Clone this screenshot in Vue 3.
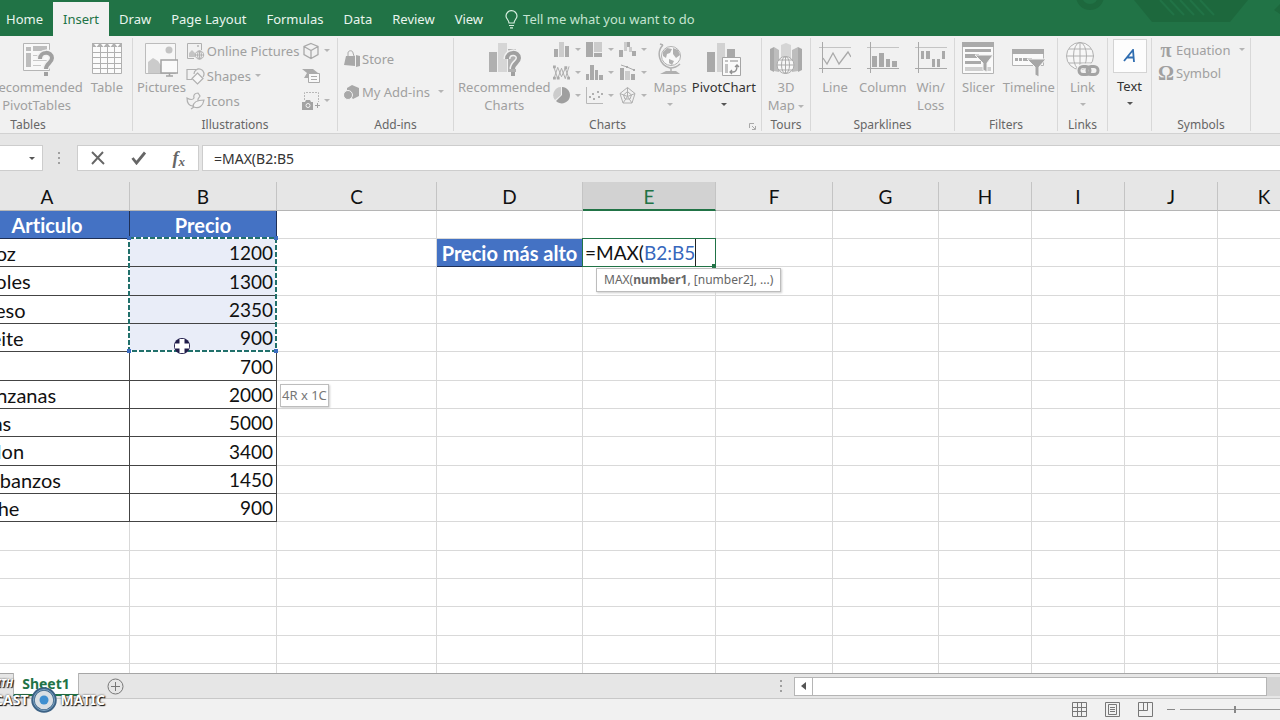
<template>
  <div class="excel">
    <nav class="tabs">
      <svg class="art" width="320" height="36" viewBox="0 0 320 36">
        <path fill="#1d683d" d="M174 0 L192 22 H270 L288 0z" />
        <g fill="none" stroke="#217346" stroke-width="2">
          <path d="M200 0 L214 15 M210 0 L224 15 M220 0 L234 15 M230 0 L244 15 M240 0 L254 15" />
        </g>
        <circle cx="130" cy="-4" r="11" fill="none" stroke="#1d683d" stroke-width="6" />
        <path fill="#1d683d" d="M-17 0 h13 v5 h-13z M314 10 l6 -6 v10z" />
      </svg>
      <button
        v-for="tab in tabs"
        :key="tab"
        class="tab"
        :class="{ active: tab === activeTab }"
        @click="activeTab = tab"
      >{{ tab }}</button>
      <button class="tell-me">
        <svg width="13" height="19" viewBox="0 0 13 19" fill="none" stroke="#d7efe0" stroke-width="1.2">
          <path d="M4 13 C4 10 1 9 1 6 A5.5 5.3 0 0 1 12 6 C12 9 9 10 9 13 Z M4 15.5 H9 M5 17.8 H8" />
        </svg>
        Tell me what you want to do
      </button>
    </nav>

    <section class="ribbon">
      <div class="group g-tables">
        <div class="body">
          <button class="big" disabled>
            <svg width="36" height="36" viewBox="0 0 36 36">
              <path fill="#f8f8f8" stroke="#b5b5b5" d="M4.500 1.500 h26 v27 h-26z" />
              <path fill="#bdbdbd" d="M7 5h5v4H7z M14 4h14v5H14z M7 11h5v14H7z" />
              <path stroke="#c8c8c8" d="M14 13.500h14 M14 18.500h14 M14 23.500h8" />
              <path fill="none" stroke="#f1f1f1" stroke-width="7" d="M21 17 C21 9 33 9 33 16 C33 21 27 21 27 27" />
              <path fill="none" stroke="#a0a0a0" stroke-width="4" d="M21 17 C21 9 33 9 33 16 C33 21 27 21 27 27" />
              <path fill="#a0a0a0" d="M25 30h4v4h-4z" />
            </svg>
            <span>Recommended<br>PivotTables</span>
          </button>
          <button class="big" disabled>
            <svg width="30" height="36" viewBox="0 0 30 36">
              <path fill="#fbfbfb" stroke="#b0b0b0" d="M.5 1.500h29v30H.5z" />
              <path fill="#b0b0b0" d="M0 1h30v4H0z" />
              <path fill="#fff" d="M2 2h5l-2.500 3z M9 2h5l-2.500 3z M16 2h5l-2.500 3z M23 2h5l-2.500 3z" />
              <path stroke="#b0b0b0" d="M0 10.500h30 M0 15.500h30 M0 21.500h30 M0 26.500h30 M8.500 5v26 M15.500 5v26 M22.500 5v26" />
            </svg>
            <span>Table</span>
          </button>
        </div>
        <div class="caption">Tables</div>
      </div>

      <div class="group g-illus">
        <div class="body">
          <button class="big" disabled>
            <svg width="34" height="36" viewBox="0 0 34 36">
              <path fill="#f7f7f7" stroke="#bcbcbc" d="M1.500 1.500h30v30h-30z" />
              <circle cx="25" cy="8" r="3.500" fill="#c4c4c4" />
              <path fill="#cbcbcb" d="M4 31 V20 L9 16 L14 19 L18 25 V31z" />
              <path fill="#fafafa" stroke="#a3a3a3" stroke-width="1.500" d="M17 18h17v13H17z" />
              <path stroke="#a3a3a3" stroke-width="1.500" d="M25.500 31v3 M22 34h7" />
            </svg>
            <span>Pictures</span>
          </button>
          <div class="rows r24">
            <button class="small" disabled>
              <svg width="19" height="18" viewBox="0 0 19 18" fill="none" stroke="#b0b0b0">
                <path d="M8 16.500H1.500v-15h14V8" />
                <path fill="#c4c4c4" stroke="none" d="M3 15v-4l3-3 3 3v4z M11 3h2v2h-2z" />
                <circle cx="13.500" cy="13" r="4.200" fill="#f1f1f1" />
                <path d="M9.500 13h8 M13.500 9v8" />
                <ellipse cx="13.500" cy="13" rx="2" ry="4" />
              </svg>
              Online Pictures
            </button>
            <button class="small" disabled>
              <svg width="19" height="18" viewBox="0 0 19 18" fill="none" stroke="#b0b0b0" stroke-width="1.200">
                <path d="M6 12.500H1v-10h9 M8 7a5 5 0 1 1 9 3" />
                <path fill="#f7f7f7" d="M11.500 6l5.500 5.500-5.500 5.500L6 11.500z" />
              </svg>
              Shapes<i class="caret side" />
            </button>
            <button class="small" disabled>
              <svg width="19" height="18" viewBox="0 0 19 18" fill="none" stroke="#b0b0b0" stroke-width="1.200">
                <path d="M1 6c3 2 6 2 7 0C7 3 9 1 12 1l2 3-2 3c1 4-2 7-5 7-4 0-6-3-6-8z" />
                <path fill="#f4f4f4" d="M7 15c0-5 4-7 11-7-1 6-5 9-10 7l-3 2" />
              </svg>
              Icons
            </button>
          </div>
          <div class="rows r24 extra">
            <button class="small" disabled aria-label="3D Models">
              <svg width="18" height="18" viewBox="0 0 18 18" fill="none" stroke="#a9a9a9" stroke-width="1.300">
                <path d="M9 1.500l7 3v8l-7 4-7-4v-8z M2 4.500l7 4 7-4 M9 8.500v8" />
              </svg>
              <i class="caret" />
            </button>
            <button class="small" disabled aria-label="SmartArt">
              <svg width="18" height="18" viewBox="0 0 18 18">
                <path fill="#aaa" d="M0 2h11l5 4-3 5H2l3-5z" />
                <path fill="#f8f8f8" stroke="#aaa" d="M6.500 6.500h11v9h-11z M9 9.500h6 M9 12.500h6" />
              </svg>
            </button>
            <button class="small" disabled aria-label="Screenshot">
              <svg width="18" height="18" viewBox="0 0 18 18">
                <path fill="none" stroke="#b8b8b8" stroke-dasharray="2 1" d="M2.500 8V.5h14V10" />
                <path fill="#a3a3a3" d="M0 10h3l1-2h4l1 2h2v8H0z M13 13h2v-2h1v2h2v1h-2v2h-1v-2h-2z" />
                <circle cx="6" cy="13.500" r="2" fill="none" stroke="#f1f1f1" />
              </svg>
              <i class="caret" />
            </button>
          </div>
        </div>
        <div class="caption">Illustrations</div>
      </div>

      <div class="group g-addins">
        <div class="body">
          <div class="rows r33">
            <button class="small" disabled>
              <svg width="16" height="18" viewBox="0 0 16 18">
                <path fill="none" stroke="#a8a8a8" d="M4 6V3c0-3 5-3 5 0l1 3" />
                <path fill="#a8a8a8" d="M2 6h9v10L0 15z M12 5l4 1v10l-4 1z" />
              </svg>
              Store
            </button>
            <button class="small" disabled>
              <svg width="16" height="18" viewBox="0 0 16 18">
                <path fill="#a8a8a8" d="M8 2l7 3v8l-6 3-6-6V5z" />
                <circle cx="4" cy="12" r="4.500" fill="#a8a8a8" stroke="#f1f1f1" />
              </svg>
              My Add-ins<i class="caret far" />
            </button>
          </div>
        </div>
        <div class="caption">Add-ins</div>
      </div>

      <div class="group g-charts">
        <div class="body">
          <button class="big" disabled>
            <svg width="34" height="36" viewBox="0 0 34 36">
              <path fill="#b0b0b0" d="M2 10h8v20H2z" />
              <path fill="#d6d6d6" d="M11 1h9v29h-9z" />
              <path fill="#b0b0b0" d="M21 7h8v23h-8z" />
              <path fill="none" stroke="#f1f1f1" stroke-width="7" d="M20 17c0-8 12-8 12-1 0 5-6 5-6 11" />
              <path fill="none" stroke="#a0a0a0" stroke-width="4" d="M20 17c0-8 12-8 12-1 0 5-6 5-6 11" />
              <path fill="#a0a0a0" d="M24 30h4v4h-4z" />
            </svg>
            <span>Recommended<br>Charts</span>
          </button>
          <div class="chart-grid">
            <button class="small" disabled aria-label="Column chart">
              <svg width="17" height="17" viewBox="0 0 17 17"><path fill="#aaa" d="M1 8h4v8H1z M12 5h4v11h-4z" /><path fill="#ccc" d="M6 1h5v15H6z" /></svg>
              <i class="caret" />
            </button>
            <button class="small" disabled aria-label="Hierarchy chart">
              <svg width="17" height="17" viewBox="0 0 17 17"><path fill="#aaa" d="M0 1h7v15H0z M8 12h8v4H8z" /><path fill="#ccc" d="M8 1h8v10H8z" /></svg>
              <i class="caret" />
            </button>
            <button class="small" disabled aria-label="Waterfall chart">
              <svg width="17" height="17" viewBox="0 0 17 17"><path fill="#aaa" d="M0 9h4v7H0z M8 1h3v5H8z M13 10h4v5h-4z" /><path fill="#ccc" d="M5 1h3v9H5z M10 6h3v5h-3z" /></svg>
              <i class="caret" />
            </button>
            <button class="small" disabled aria-label="Line chart">
              <svg width="17" height="17" viewBox="0 0 18 17" fill="none" stroke="#aaa"><path d="M1 3l4 12 4-11 4 11 4-13 M1 15L5 3l4 10 4-9 4 11" /><path fill="#aaa" stroke="none" d="M0 1h3v3H0z M4 13h3v3H4z M12 2h3v3h-3z M15 13h3v3h-3z M0 13h3v3H0z" /></svg>
              <i class="caret" />
            </button>
            <button class="small" disabled aria-label="Statistic chart">
              <svg width="17" height="17" viewBox="0 0 17 17"><path fill="#aaa" d="M0 10h3v6H0z M4 1h4v15H4z M9 6h3v10H9z M13 11h4v5h-4z" /></svg>
              <i class="caret" />
            </button>
            <button class="small" disabled aria-label="Combo chart">
              <svg width="17" height="17" viewBox="0 0 17 17"><path fill="#aaa" d="M1 4h4v12H1z M12 10h4v6h-4z" /><path fill="#ccc" d="M6 7h5v9H6z" /><path fill="none" stroke="#aaa" d="M2 1l6 2 7 3" /><path fill="#aaa" d="M7 2h2v2H7z M14 5h2v2h-2z" /></svg>
              <i class="caret" />
            </button>
            <button class="small" disabled aria-label="Pie chart">
              <svg width="17" height="17" viewBox="0 0 17 17"><path fill="#9f9f9f" d="M9 0a8.200 8.200 0 1 1-6 14l6-6z" /><path fill="#ccc" d="M8 0v8l-6 5A8 8 0 0 1 8 0z" /></svg>
              <i class="caret" />
            </button>
            <button class="small" disabled aria-label="Scatter chart">
              <svg width="17" height="17" viewBox="0 0 17 17"><path fill="none" stroke="#b8b8b8" d="M.5 0v16.500H17" /><path fill="#b0b0b0" d="M3 9h2v2H3z M6 6h2v2H6z M7 11h2v2H7z M11 4h2v2h-2z M12 9h2v2h-2z M15 6h2v2h-2z" /></svg>
              <i class="caret" />
            </button>
            <button class="small" disabled aria-label="Radar chart">
              <svg width="17" height="17" viewBox="0 0 17 17" fill="none" stroke="#b0b0b0"><path d="M8.500.500l7.500 6-3 9.500H4L1 6.500z M8.500 4.500l4 3.500-1.500 4H6L4.500 8z M8.500.500v9 M16 6.500l-7.500 3L13 16 M1 6.500l7.500 3L4 16" /></svg>
              <i class="caret" />
            </button>
          </div>
          <button class="big" disabled>
            <svg width="26" height="36" viewBox="0 0 26 36">
              <circle cx="14" cy="14" r="9.500" fill="#f8f8f8" stroke="#b0b0b0" />
              <path fill="#b0b0b0" d="M6 10l4-4 5 1-2 4-3 1-1 4-3-2z M16 6l5 2 2 5-4 3-3-4z M12 17l5 2-2 4-3-2z" />
              <path fill="none" stroke="#b0b0b0" stroke-width="1.500" d="M6 3C-1 10 2 23 13 26c4 0 7-1 10-4 M14 26v4 M6 3l-3-1" />
              <path fill="#b0b0b0" d="M9 29h10l4 3H3z" />
            </svg>
            <span>Maps</span><i class="caret" />
          </button>
          <button class="big live">
            <svg width="34" height="36" viewBox="0 0 34 36">
              <path fill="#a9a9a9" d="M0 10h8v20H0z M20 7h8v8h-8z" />
              <path fill="#d2d2d2" d="M10 1h8v29h-8z" />
              <path fill="#fafafa" stroke="#a5a5a5" d="M15.500 15.500h18v18h-18z" />
              <path fill="#c2c2c2" d="M18 18h3v2h-3z M23 18h8v2h-8z M18 22h3v9h-3z" />
              <path fill="none" stroke="#909090" stroke-width="1.300" d="M23 30h3c3 0 4-3 4-6 M25 28l-2 2 2 2 M28 25l2-2 2 2" />
            </svg>
            <span>PivotChart</span><i class="caret" />
          </button>
        </div>
        <div class="caption">Charts</div>
        <button class="launcher" aria-label="Charts options">
          <svg width="7" height="7" viewBox="0 0 7 7" fill="none" stroke="#a9a9a9"><path d="M.5 5V.5H5 M3 3l3 3 M6.500 3v3.500H3" /></svg>
        </button>
      </div>

      <div class="group g-tours">
        <div class="body">
          <button class="big" disabled>
            <svg width="32" height="36" viewBox="0 0 32 36">
              <path fill="#aaa" d="M0 7l4-2v25l-4-2z M28 5l4 2v21l-4 2z" />
              <path fill="#bdbdbd" d="M4 5l5 3v22l-5-1z M22 8l6-3v24l-6 1z" />
              <path fill="#d5d5d5" d="M11 3l5-2 5 2v14H11z" />
              <circle cx="15.500" cy="23" r="8.500" fill="#f8f8f8" stroke="#ababab" />
              <path fill="none" stroke="#ababab" d="M7 23h17 M9 18h13 M9 28h13 M15.500 15v16" />
              <ellipse cx="15.500" cy="23" rx="4" ry="8.500" fill="none" stroke="#ababab" />
            </svg>
            <span>3D<br>Map <i class="caret inline" /></span>
          </button>
        </div>
        <div class="caption">Tours</div>
      </div>

      <div class="group g-spark">
        <div class="body">
          <button class="big" disabled>
            <svg width="32" height="36" viewBox="0 0 32 36" fill="none" stroke="#a9a9a9">
              <path stroke="#c4c4c4" d="M0 5.500h32" /><path d="M3.500 0v31 M0 26.500h32" />
              <path stroke-width="1.300" d="M4 16l4 6 6-11 6 11 9-12 3 5" />
            </svg>
            <span>Line</span>
          </button>
          <button class="big" disabled>
            <svg width="32" height="36" viewBox="0 0 32 36">
              <path stroke="#c4c4c4" d="M0 5.500h32" /><path stroke="#a9a9a9" d="M3.500 0v31 M0 26.500h32" />
              <path fill="#a9a9a9" d="M5 14h5v11H5z M12 11h5v14h-5z M19 17h4v8h-4z M25 19h5v6h-5z" />
            </svg>
            <span>Column</span>
          </button>
          <button class="big" disabled>
            <svg width="32" height="36" viewBox="0 0 32 36">
              <path stroke="#c4c4c4" d="M0 5.500h32" /><path stroke="#a9a9a9" d="M3.500 0v31 M0 26.500h32" />
              <path fill="#a9a9a9" d="M6 9h3v8H6z M11 9h4v8h-4z M17 17h3v8h-3z M22 17h3v8h-3z M27 9h3v8h-3z" />
            </svg>
            <span>Win/<br>Loss</span>
          </button>
        </div>
        <div class="caption">Sparklines</div>
      </div>

      <div class="group g-filters">
        <div class="body">
          <button class="big" disabled>
            <svg width="32" height="36" viewBox="0 0 32 36">
              <path fill="#fafafa" stroke="#b4b4b4" d="M.5.5h31v31H.5z" />
              <path fill="#aaa" d="M0 0h32v5H0z M3 7h26v3H3z M3 12h14v4H3z M3 19h16v3H3z" />
              <path fill="#cfcfcf" d="M3 25h26v4H3z" />
              <path fill="#a6a6a6" stroke="#f4f4f4" d="M13 13h18l-6 8v9l-4-2v-7z" />
            </svg>
            <span>Slicer</span>
          </button>
          <button class="big" disabled>
            <svg width="34" height="36" viewBox="0 0 34 36">
              <path fill="#fafafa" stroke="#b4b4b4" d="M.5 7.500h31v16H.5z" />
              <path fill="#aaa" d="M0 7h32v5H0z M3 16h3v3H3z M7 16h3v3H7z M11 16h9v3h-9z" />
              <path fill="#a6a6a6" stroke="#f4f4f4" d="M15 17h19l-7 8v10l-4-2v-8z" />
            </svg>
            <span>Timeline</span>
          </button>
        </div>
        <div class="caption">Filters</div>
      </div>

      <div class="group g-links">
        <div class="body">
          <button class="big" disabled>
            <svg width="34" height="36" viewBox="0 0 34 36" fill="none" stroke="#b0b0b0">
              <circle cx="14" cy="14" r="13.500" fill="#f7f7f7" />
              <ellipse cx="14" cy="14" rx="6.500" ry="13.500" />
              <path d="M14 0v28 M1 14h27 M3 7h22 M3 21h22" />
              <rect x="13" y="24" width="20" height="9" rx="4.500" stroke="#f1f1f1" stroke-width="5" />
              <g stroke="#a3a3a3" stroke-width="3"><rect x="13" y="24.500" width="11" height="8" rx="4" /><rect x="21" y="24.500" width="11" height="8" rx="4" /></g>
            </svg>
            <span>Link</span><i class="caret" />
          </button>
        </div>
        <div class="caption">Links</div>
      </div>

      <div class="group g-text">
        <div class="body">
          <button class="big live text-btn">
            <span class="tile">
              <svg width="14" height="14" viewBox="0 0 14 14" fill="none" stroke="#2f6db0" stroke-width="1.800"><path d="M1 12L10 1l1 12 M4 8.500h7" /></svg>
            </span>
            <span>Text</span><i class="caret" />
          </button>
        </div>
      </div>

      <div class="group g-symbols">
        <div class="body">
          <div class="rows r23">
            <button class="small" disabled><span class="glyph">π</span>Equation<i class="caret far" /></button>
            <button class="small" disabled><span class="glyph">Ω</span>Symbol</button>
          </div>
        </div>
        <div class="caption">Symbols</div>
      </div>
    </section>

    <section class="formula-bar">
      <button class="name-box" aria-label="Name box"><i class="caret" /></button>
      <span class="dots"><b /><b /><b /></span>
      <div class="entry-buttons">
        <button aria-label="Cancel">
          <svg width="14" height="14" viewBox="0 0 14 14" fill="none" stroke="#666" stroke-width="1.900"><path d="M1 1l12 12 M12 1L1 13" /></svg>
        </button>
        <button aria-label="Enter">
          <svg width="16" height="14" viewBox="0 0 16 14" fill="none" stroke="#666" stroke-width="2.800"><path d="M1.500 7l4 5L14 1.500" /></svg>
        </button>
        <button aria-label="Insert function" class="fx">f<sub>x</sub></button>
      </div>
      <input v-model="formula" class="formula" aria-label="Formula bar">
    </section>

    <main class="sheet">
      <table>
        <colgroup>
          <col v-for="col in columns" :key="col.name" :style="{ width: col.width + 'px' }">
        </colgroup>
        <thead>
          <tr>
            <th v-for="col in columns" :key="col.name" :class="{ current: col.name === 'E' }">{{ col.name }}</th>
          </tr>
        </thead>
        <tbody>
          <tr v-for="row in 30" :key="row">
            <td v-for="col in columns" :key="col.name" :class="cellClass(col.name, row)">
              <template v-if="col.name === 'E' && row === 2">
                <div class="editor">=MAX(<span>B2:B5</span></div>
                <div class="tip">MAX(<b>number1</b>, [number2], ...)</div>
              </template>
              <template v-else>{{ cellText(col.name, row) }}</template>
              <div v-if="col.name === 'B' && row === 2" class="range">
                <svg class="ants" width="100%" height="100%">
                  <rect x="1" y="1" width="147" height="113" fill="none" stroke="#fff" stroke-width="2" />
                  <rect x="1" y="1" width="147" height="113" fill="none" stroke="#21706b" stroke-width="2" stroke-dasharray="5 2" />
                </svg>
                <i class="handle tl" /><i class="handle tr" /><i class="handle bl" /><i class="handle br" />
                <svg class="pointer" width="18" height="18" viewBox="0 0 18 18">
                  <circle cx="9" cy="9" r="8" fill="#201c4a" />
                  <path fill="#fff" d="M6.500 2h5v4.500H16v5h-4.500V16h-5v-4.500H2v-5h4.500z" />
                </svg>
                <div class="size-tip">4R x 1C</div>
              </div>
            </td>
          </tr>
        </tbody>
      </table>
    </main>

    <footer>
      <div class="sheet-tabs">
        <button class="sheet-tab">Sheet1</button>
        <button class="add" aria-label="New sheet">
          <svg width="17" height="17" viewBox="0 0 17 17" fill="none" stroke="#777"><circle cx="8.500" cy="8.500" r="7.500" /><path d="M4 8.500h9 M8.500 4v9" /></svg>
        </button>
        <span class="dots"><b /><b /><b /></span>
        <div class="scroll">
          <button class="arrow" aria-label="Scroll left"><i /></button>
          <div class="thumb" />
        </div>
      </div>
      <div class="status">
        <button aria-label="Normal view">
          <svg width="15" height="15" viewBox="0 0 15 15" fill="none" stroke="#777"><path d="M.5.5h14v14H.5z M.5 5.500h14 M.5 9.500h14 M5.500.5v14 M9.500.5v14" /></svg>
        </button>
        <button aria-label="Page layout view">
          <svg width="15" height="15" viewBox="0 0 15 15" fill="none" stroke="#777"><path d="M.5.5h14v14H.5z M3.500 2.500h8v10h-8z M5 5.500h5 M5 7.500h5 M5 9.500h5" /></svg>
        </button>
        <button aria-label="Page break view">
          <svg width="15" height="15" viewBox="0 0 15 15" fill="none" stroke="#777"><path d="M.5.5h14v14H.5z M.5 8.500h9V.5 M5.500.5v8" /></svg>
        </button>
        <button class="minus" aria-label="Zoom out"><i /></button>
        <input type="range" class="zoom" min="0" max="100" value="50" aria-label="Zoom">
      </div>
      <div class="watermark">
        <span class="with">WITH</span>
        <span class="cast">CAST</span>
        <svg width="28" height="28" viewBox="0 0 28 28">
          <circle cx="14" cy="14" r="11" fill="#d9dfe4" stroke="#3c6285" stroke-width="3.500" />
          <circle cx="14" cy="14" r="10.500" fill="none" stroke="#7fa6c6" />
          <circle cx="14" cy="14" r="4.500" fill="#3f8fd0" />
        </svg>
        <span class="matic">MATIC</span>
      </div>
    </footer>
  </div>
</template>

<script setup>
import { ref } from 'vue';

const tabs = ['Home', 'Insert', 'Draw', 'Page Layout', 'Formulas', 'Data', 'Review', 'View'];
const activeTab = ref('Insert');
const formula = ref('=MAX(B2:B5');

const widths = [165, 147, 160, 146, 133, 117, 106];
const columns = 'ABCDEFGHIJK'.split('').map((name, i) => ({ name, width: widths[i] || 93 }));

const items = [
  ['Articulo', 'Precio'],
  ['Arroz', 1200],
  ['Frijoles', 1300],
  ['Queso', 2350],
  ['Aceite', 900],
  ['', 700],
  ['Manzanas', 2000],
  ['Uvas', 5000],
  ['Melon', 3400],
  ['Garbanzos', 1450],
  ['Leche', 900],
];

const cellText = (col, row) => {
  if (col === 'D' && row === 2) return 'Precio más alto';
  const item = items[row - 1];
  if (!item) return '';
  if (col === 'A') return item[0];
  if (col === 'B') return item[1];
  return '';
};

const cellClass = (col, row) => ({
  filled: (col === 'A' || col === 'B') && row <= items.length,
  title: ((col === 'A' || col === 'B') && row === 1) || (col === 'D' && row === 2),
  name: col === 'A' && row > 1,
  number: col === 'B' && row > 1,
  picked: col === 'B' && row >= 2 && row <= 5,
  anchor: col === 'B' && row === 2,
  editing: col === 'E' && row === 2,
});
</script>

<style>
body {
  margin: 0;
  overflow: hidden;
}
</style>

<style scoped>
.excel {
  height: 100vh;
  display: flex;
  flex-direction: column;
  overflow: hidden;
  font-family: "Noto Sans", "Open Sans", sans-serif;
  font-size: 13px;
  color: #333;
  background: #e6e6e6;
}

button {
  font: inherit;
  color: inherit;
  background: none;
  border: none;
  padding: 0;
  margin: 0;
  white-space: nowrap;
}

svg {
  display: block;
  flex: none;
}

/* tabs */
.tabs {
  position: relative;
  flex: none;
  display: flex;
  height: 36px;
  box-sizing: border-box;
  padding-top: 2px;
  background: #217346;
  color: #e9f5ee;
}

.art {
  position: absolute;
  top: 0;
  right: 0;
}

.tab {
  padding: 0 10px;
}

.tab:first-of-type {
  padding-left: 6px;
}

.tab.active {
  background: #f1f1f1;
  color: #217346;
}

.tell-me {
  display: flex;
  align-items: center;
  gap: 5px;
  padding-left: 12px;
  color: #c5e3d1;
}

/* ribbon */
.ribbon {
  flex: none;
  display: flex;
  height: 98px;
  box-sizing: border-box;
  padding: 2px 0;
  margin-left: -76px;
  background: #f1f1f1;
  border-bottom: 1px solid #d2d2d2;
}

.group {
  position: relative;
  flex: none;
  box-sizing: border-box;
  display: flex;
  flex-direction: column;
  border-right: 1px solid #d8d8d8;
}

.body {
  flex: 1;
  display: flex;
}

.caption {
  font-size: 12px;
  line-height: 12px;
  text-align: center;
  color: #666;
}

.g-tables { width: 209px; }
.g-tables .body { justify-content: flex-end; gap: 8px; padding-right: 9px; }
.g-illus { width: 205px; }
.g-illus .body { padding-left: 4px; }
.g-addins { width: 116px; }
.g-addins .body { padding: 4px 0 0 6px; }
.g-charts { width: 308px; }
.g-charts .body { padding-left: 4px; gap: 2px; }
.g-tours { width: 49px; }
.g-tours .body, .g-links .body, .g-text .body { justify-content: center; }
.g-spark { width: 144px; }
.g-spark .body { padding-left: 8px; gap: 8px; }
.g-filters { width: 103px; }
.g-filters .body { padding-left: 7px; gap: 8px; }
.g-links { width: 50px; }
.g-text { width: 44px; }
.g-symbols { width: 99px; }
.g-symbols .body { padding-left: 6px; }

.big {
  display: flex;
  flex-direction: column;
  align-items: center;
  height: 76px;
  padding-top: 4px;
  line-height: 18px;
  color: #a0a0a0;
}

.big > .caret {
  margin-top: 7px;
}

.small {
  display: flex;
  align-items: center;
  gap: 2px;
  color: #a0a0a0;
}

.big.live {
  color: #333;
}

.caret {
  display: inline-block;
  flex: none;
  border: 3px solid transparent;
  border-top-color: #b5b5b5;
  border-bottom: none;
}

.live .caret,
.name-box .caret {
  border-top-color: #555;
}

.inline {
  vertical-align: middle;
}

.side {
  margin-left: 2px;
}

.far {
  margin-left: 6px;
}

.r23 .small { height: 23px; }
.r24 .small { height: 25px; }
.r33 .small { height: 33px; }

.extra {
  margin-left: 3px;
}

.extra .small {
  gap: 4px;
}

.chart-grid {
  display: grid;
  grid-template-columns: repeat(3, 33px);
  grid-auto-rows: 23px;
}

.chart-grid .small {
  gap: 5px;
}

.g-charts .live {
  margin-left: 3px;
}

.text-btn {
  padding-top: 1px;
}

.tile {
  display: grid;
  place-items: center;
  width: 32px;
  height: 32px;
  margin-bottom: 4px;
  background: #fdfdfd;
  border: 1px solid #d4d4d4;
}

.glyph {
  width: 16px;
  font: bold 20px/20px "Liberation Serif", serif;
  text-align: center;
}

.launcher {
  position: absolute;
  right: 5px;
  bottom: 1px;
}

/* formula bar */
.formula-bar {
  flex: none;
  display: flex;
  align-items: center;
  height: 48px;
}

.name-box {
  display: flex;
  align-items: center;
  justify-content: flex-end;
  width: 43px;
  height: 26px;
  box-sizing: border-box;
  padding-right: 7px;
  background: #fff;
  border: 1px solid #cdcdcd;
  border-left: none;
}

.dots {
  display: flex;
  flex-direction: column;
  gap: 3px;
}

.dots b {
  width: 2px;
  height: 2px;
  background: #a0a0a0;
}

.formula-bar .dots {
  margin: 0 17px 0 15px;
}

.entry-buttons {
  display: flex;
  align-items: center;
  justify-content: space-around;
  width: 122px;
  height: 26px;
  box-sizing: border-box;
  background: #fff;
  border: 1px solid #cdcdcd;
}

.fx {
  font: italic bold 18px/18px "Liberation Serif", serif;
  color: #666;
}

.fx sub {
  font-size: 13px;
  line-height: 1px;
  vertical-align: -2px;
}

.formula {
  flex: 1;
  height: 26px;
  box-sizing: border-box;
  margin-left: 3px;
  padding: 0 11px;
  font: inherit;
  font-size: 14px;
  color: #333;
  background: #fff;
  border: 1px solid #cdcdcd;
  border-right: none;
  border-radius: 0;
  outline: none;
}

/* grid */
.sheet {
  flex: 1;
  min-height: 0;
  overflow: hidden;
  background: #fff;
}

table {
  width: max-content;
  margin-left: -35px;
  table-layout: fixed;
  border-collapse: separate;
  border-spacing: 0;
  font-family: Lato, "Open Sans", sans-serif;
  font-size: 19px;
  font-variant-ligatures: none;
  line-height: 24px;
  color: #111;
}

th {
  height: 29px;
  box-sizing: border-box;
  padding: 2px 0 0;
  font-weight: normal;
  background: #e6e6e6;
  border-right: 1px solid #c4c4c4;
  border-bottom: 1px solid #b5b5b5;
}

th.current {
  color: #217346;
  background: #d2d2d2;
  border-bottom: 2px solid #217346;
}

td {
  height: 28px;
  box-sizing: border-box;
  padding: 1px 3px 0;
  white-space: nowrap;
  border-right: 1px solid #d9d9d9;
  border-bottom: 1px solid #d9d9d9;
}

tr:nth-child(3n) td {
  height: 29px;
}

td.filled {
  border-color: #444;
}

td.title {
  padding-top: 0;
  font-size: 20px;
  font-weight: bold;
  text-align: center;
  color: #fff;
  background: #4472c4;
  border-color: #1e2f55;
}

td.name {
  padding-top: 0;
  font-size: 20px;
}

td.number {
  text-align: right;
}

td.picked {
  background: #e9edf8;
}

td.anchor,
td.editing {
  position: relative;
}

.range {
  position: absolute;
  z-index: 1;
  top: -2px;
  left: -2px;
  width: 149px;
  height: 115px;
}

.handle {
  position: absolute;
  width: 4px;
  height: 4px;
  background: #3b6cc0;
}

.tl, .tr { top: -1px; }
.bl, .br { bottom: -1px; }
.tl, .bl { left: -1px; }
.tr, .br { right: -1px; }

.pointer {
  position: absolute;
  left: 45px;
  top: 100px;
}

.size-tip {
  position: absolute;
  left: 152px;
  top: 147px;
  padding: 0 1px;
  font: 13px/21px "Noto Sans", sans-serif;
  color: #777;
  background: #fff;
  border: 1px solid #bdbdbd;
  box-shadow: 1px 1px 2px #ccc;
}

.editor {
  position: absolute;
  top: -1px;
  left: -1px;
  right: -1px;
  bottom: -1px;
  padding-left: 2px;
  line-height: 28px;
  background: #fff;
  border: 1px solid #217346;
}

.editor::after {
  content: "";
  position: absolute;
  right: -1px;
  bottom: -2px;
  width: 4px;
  height: 4px;
  background: #217346;
}

.editor span {
  display: inline-block;
  height: 27px;
  color: #3868bd;
  border-right: 1px solid #222;
}

.tip {
  position: absolute;
  z-index: 1;
  top: 29px;
  left: 13px;
  padding: 0 7px;
  font: 12px/22px "Noto Sans", sans-serif;
  color: #666;
  background: #fff;
  border: 1px solid #bdbdbd;
  box-shadow: 1px 1px 2px #ccc;
}

/* footer */
footer {
  position: relative;
  flex: none;
}

.sheet-tabs {
  display: flex;
  align-items: center;
  height: 26px;
  box-sizing: border-box;
  background: #e6e6e6;
  border-top: 1px solid #a6a6a6;
  border-bottom: 1px solid #c8c8c8;
}

.sheet-tab {
  align-self: stretch;
  width: 66px;
  margin: -1px 0 2px 13px;
  font-size: 14px;
  font-weight: bold;
  color: #217346;
  background: #fff;
  border: 1px solid #b5b5b5;
  border-top: none;
  border-bottom: 2px solid #217346;
}

.add {
  margin-left: 28px;
  margin-right: auto;
}

.sheet-tabs .dots {
  margin-right: 12px;
}

.scroll {
  display: flex;
  width: 38%;
  height: 19px;
  background: #d4d4d4;
}

.arrow {
  display: grid;
  place-items: center;
  width: 19px;
  background: #fff;
  border: 1px solid #b5b5b5;
}

.arrow i {
  border: 4px solid transparent;
  border-right: 5px solid #555;
  border-left: none;
}

.thumb {
  flex: 1;
  margin-right: 13px;
  background: #fff;
  border: 1px solid #b5b5b5;
  border-left: none;
}

.status {
  display: flex;
  align-items: center;
  justify-content: flex-end;
  gap: 18px;
  height: 21px;
  margin-right: -10px;
  background: #f1f1f1;
}

.minus {
  margin: 0 -13px 0 -4px;
}

.minus i {
  display: block;
  width: 8px;
  height: 1px;
  background: #888;
}

.zoom {
  appearance: none;
  width: 110px;
  height: 1px;
  margin: 0;
  background: #999;
}

.zoom::-webkit-slider-thumb {
  appearance: none;
  width: 2px;
  height: 7px;
  background: #888;
}

.watermark {
  position: absolute;
  left: -6px;
  top: 13px;
  display: flex;
  align-items: center;
  gap: 2px;
  font-weight: bold;
  font-size: 14px;
  line-height: 28px;
  color: #fff;
  text-shadow: 1px 1px 1px #111, 0 0 2px #333;
}

.with {
  position: absolute;
  left: -6px;
  top: -17px;
  font-size: 10px;
  font-style: italic;
}
</style>
